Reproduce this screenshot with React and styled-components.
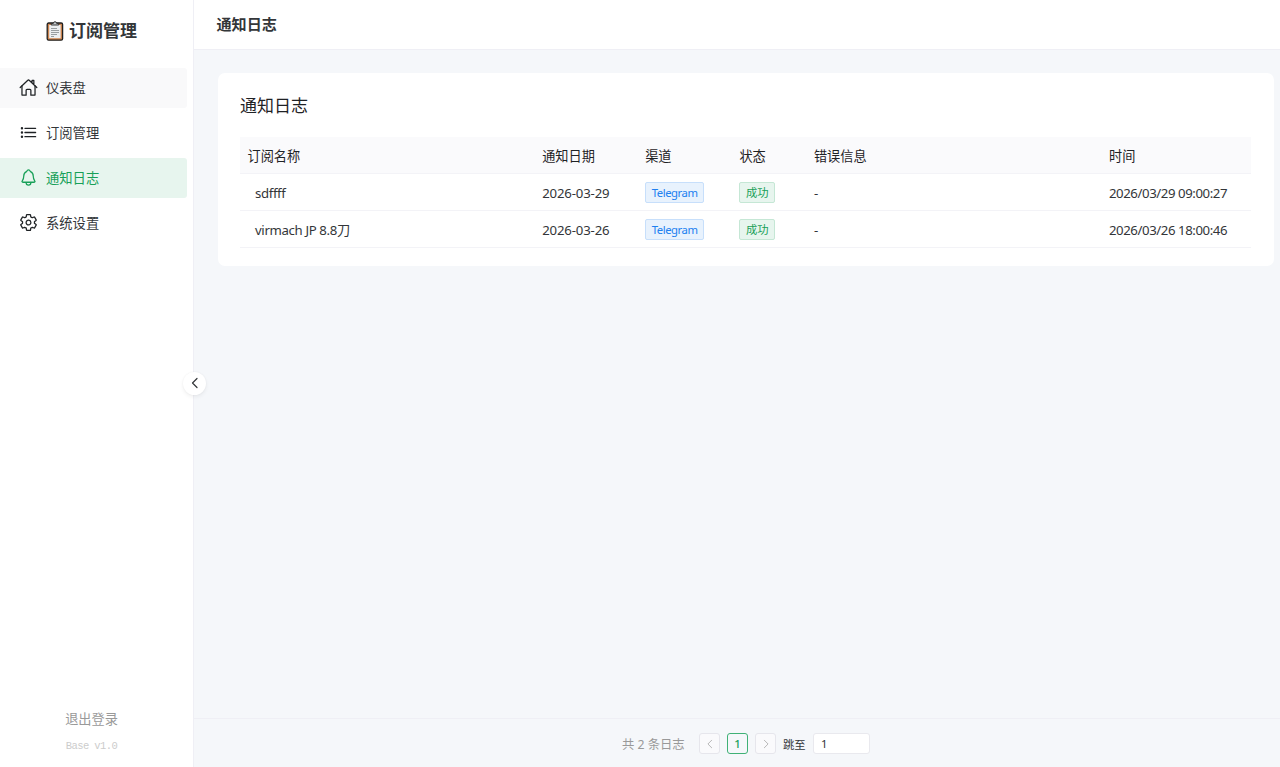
import React from 'react'
import styled, { createGlobalStyle } from 'styled-components'
import { IoHomeOutline, IoListOutline, IoNotificationsOutline, IoSettingsOutline } from 'react-icons/io5'

const GlobalStyle = createGlobalStyle`
    * {
        box-sizing: border-box;
    }

    body {
        margin: 0;
        font-family: "Noto Sans", "Noto Sans CJK SC", sans-serif;
        font-size: 13.2px;
        color: #333639;
        background-color: #fff;
    }
`
const Layout = styled.div`
    display: flex;
    height: 767px;
    overflow: hidden;
`
const Sider = styled.aside`
    position: relative;
    display: flex;
    flex-direction: column;
    width: 194px;
    flex: none;
    border-right: 1px solid #efeff5;
    background-color: #fff;
`
const Logo = styled.div`
    display: flex;
    align-items: center;
    justify-content: center;
    gap: 5px;
    height: 62px;
    margin-bottom: 6px;
    padding-right: 10px;
    font-size: 17px;
    font-weight: 700;
    line-height: 24px;
    color: #333639;
`
const Menu = styled.nav`
    display: flex;
    flex-direction: column;
    gap: 5px;
    padding-right: 6px;
`
const MenuItem = styled.a`
    display: flex;
    align-items: center;
    gap: 8px;
    height: 40px;
    padding: 0 0 1px 19px;
    border-radius: 0 3px 3px 0;
    font-size: 13.3px;
    cursor: pointer;
    color: ${props => props.$active ? '#18a058' : '#333639'};
    background-color: ${props => props.$active ? '#e7f5ee' : props.$hovered ? '#f9f9fa' : 'transparent'};

    svg {
        width: 19px;
        height: 19px;
        color: ${props => props.$active ? '#18a058' : '#1f2225'};
    }

    svg * {
        stroke-width: 34px;
    }
`
const SiderFooter = styled.div`
    display: flex;
    flex-direction: column;
    align-items: center;
    margin-top: auto;
    padding: 0 10px 14px 0;
`
const Logout = styled.button`
    padding: 0;
    border: none;
    background: none;
    font: inherit;
    line-height: 20px;
    color: #999;
    cursor: pointer;
`
const Version = styled.span`
    margin-top: 10px;
    font-family: "Liberation Mono", monospace;
    font-size: 10.5px;
    line-height: 14px;
    letter-spacing: -0.6px;
    color: #ccc;
`
const Collapse = styled.button`
    position: absolute;
    top: 372px;
    right: -13px;
    display: flex;
    align-items: center;
    justify-content: center;
    width: 23px;
    height: 23px;
    padding: 0 0 1px;
    border: none;
    border-radius: 50%;
    color: #333639;
    background-color: #fff;
    box-shadow: 0 2px 4px rgba(0, 0, 0, 0.06), 0 0 2px rgba(0, 0, 0, 0.05);
`
const Main = styled.main`
    display: flex;
    flex-direction: column;
    flex: 1;
    min-width: 0;
    background-color: #f5f7fa;
`
const Header = styled.header`
    height: 50px;
    padding-left: 22.5px;
    border-bottom: 1px solid #efeff5;
    font-size: 15.1px;
    font-weight: 700;
    line-height: 49px;
    background-color: #fff;
`
const Content = styled.section`
    flex: 1;
    padding: 23px 6px 0 24px;
`
const Card = styled.div`
    height: 193px;
    padding: 18px 23px 0 22px;
    border-radius: 7px;
    background-color: #fff;
`
const CardTitle = styled.div`
    height: 46px;
    font-size: 17px;
    line-height: 29px;
    color: #1f2225;
`
const Row = styled.div`
    display: grid;
    grid-template-columns: 294.7px 103px 94.2px 74.5px 295.1px 1fr;
    align-items: center;
    height: 37px;
    border-bottom: 1px solid #f3f3f7;
    color: ${props => props.$head ? '#1f2225' : '#333639'};
    background-color: ${props => props.$head ? '#fafafc' : '#fff'};
`
const Cell = styled.div`
    padding-left: ${props => props.$indent ? '15px' : '7.5px'};
    line-height: 22px;
    letter-spacing: ${props => props.$tracking || 0}px;
    white-space: nowrap;
`
const Tag = styled.span`
    display: flex;
    align-items: center;
    justify-content: center;
    width: ${props => props.$type === 'info' ? '59px' : '36px'};
    height: 21px;
    padding-top: 1px;
    border: 1px solid ${props => props.$type === 'info' ? '#c7dffb' : '#c5e7d5'};
    border-radius: 2px;
    font-size: 11.3px;
    line-height: 20px;
    letter-spacing: ${props => props.$type === 'info' ? '-0.45px' : 0};
    color: ${props => props.$type === 'info' ? '#2080f0' : '#18a058'};
    background-color: ${props => props.$type === 'info' ? '#e8f2fd' : '#e7f5ee'};
`
const Text = styled(Cell)`
    padding-top: 1px;
`
const Footer = styled.footer`
    display: flex;
    align-items: center;
    height: 49px;
    padding: 1px 0 0 428px;
    border-top: 1px solid #efeff5;
`
const Total = styled.span`
    width: 77px;
    font-size: 12.3px;
    color: #999;
    white-space: nowrap;
`
const PageButton = styled.button`
    display: flex;
    align-items: center;
    justify-content: center;
    width: 21px;
    height: 21px;
    margin-right: 7px;
    padding: 0;
    border: 1px solid ${props => props.$active ? '#3fb176' : '#e6e6ec'};
    border-radius: 3px;
    font: inherit;
    font-size: 11.3px;
    font-weight: ${props => props.$active ? 500 : 400};
    color: ${props => props.$active ? '#18a058' : '#b8b8b8'};
    background-color: ${props => props.$active ? 'transparent' : '#fafafc'};
`
const Jump = styled.span`
    width: 30px;
    font-size: 11.3px;
`
const JumpInput = styled.input`
    width: 57px;
    height: 21px;
    padding: 0 7px;
    border: 1px solid #e9e9ee;
    border-radius: 3px;
    font: inherit;
    font-size: 11.3px;
    color: #333639;
    background-color: #fff;
`

const Clipboard = () => (
    <svg width="18" height="20" viewBox="0 0 18 20">
        <rect x="1.2" y="2" width="15.4" height="17.2" rx="1.4" fill="#cf8650" stroke="#202020" strokeWidth="1.3" />
        <path d="M3.2 4h11.4v13.2H3.2z" fill="#eceff1" />
        <path d="M5.2 4V2.4h2.1Q7.5.7 9 .7t1.7 1.7h2.1V4z" fill="#c4c9cc" stroke="#252525" strokeWidth=".9" />
        <path d="M5 7.5h6M5 9.5h8M5 11.5h8M5 13.5h6M5 15.5h3" stroke="#83898d" strokeWidth=".8" />
    </svg>
)

const Chevron = ({ size, right, width = 1.2 }) => (
    <svg width={size} height={size} viewBox="0 0 12 12" fill="none" stroke="currentColor" strokeWidth={width} strokeLinecap="round" strokeLinejoin="round">
        <path d={right ? 'M4 1.5 8.5 6 4 10.5' : 'M8 1.5 3.5 6 8 10.5'} />
    </svg>
)

const menu = [
    { label: '仪表盘', icon: IoHomeOutline, hovered: true },
    { label: '订阅管理', icon: IoListOutline },
    { label: '通知日志', icon: IoNotificationsOutline, active: true },
    { label: '系统设置', icon: IoSettingsOutline }
]

const columns = ['订阅名称', '通知日期', '渠道', '状态', '错误信息', '时间']

const logs = [
    { name: 'sdffff', date: '2026-03-29', time: '2026/03/29 09:00:27' },
    { name: 'virmach JP 8.8刀', date: '2026-03-26', time: '2026/03/26 18:00:46' }
]

const App = () => (
    <>
        <GlobalStyle />
        <Layout>
            <Sider>
                <Logo><Clipboard />订阅管理</Logo>
                <Menu>
                    {menu.map(({ label, icon: Icon, active, hovered }) => (
                        <MenuItem key={label} $active={active} $hovered={hovered}>
                            <Icon />
                            {label}
                        </MenuItem>
                    ))}
                </Menu>
                <SiderFooter>
                    <Logout>退出登录</Logout>
                    <Version>Base v1.0</Version>
                </SiderFooter>
                <Collapse><Chevron size={12} /></Collapse>
            </Sider>
            <Main>
                <Header>通知日志</Header>
                <Content>
                    <Card>
                        <CardTitle>通知日志</CardTitle>
                        <Row $head>
                            {columns.map(title => <Text key={title}>{title}</Text>)}
                        </Row>
                        {logs.map(log => (
                            <Row key={log.time}>
                                <Text $indent $tracking={-0.35}>{log.name}</Text>
                                <Text $tracking={-0.16}>{log.date}</Text>
                                <Cell><Tag $type="info">Telegram</Tag></Cell>
                                <Cell><Tag $type="success">成功</Tag></Cell>
                                <Text>-</Text>
                                <Text $tracking={-0.41}>{log.time}</Text>
                            </Row>
                        ))}
                    </Card>
                </Content>
                <Footer>
                    <Total>共 2 条日志</Total>
                    <PageButton><Chevron size={10} /></PageButton>
                    <PageButton $active>1</PageButton>
                    <PageButton><Chevron size={10} right /></PageButton>
                    <Jump>跳至</Jump>
                    <JumpInput defaultValue="1" />
                </Footer>
            </Main>
        </Layout>
    </>
)

export default App
